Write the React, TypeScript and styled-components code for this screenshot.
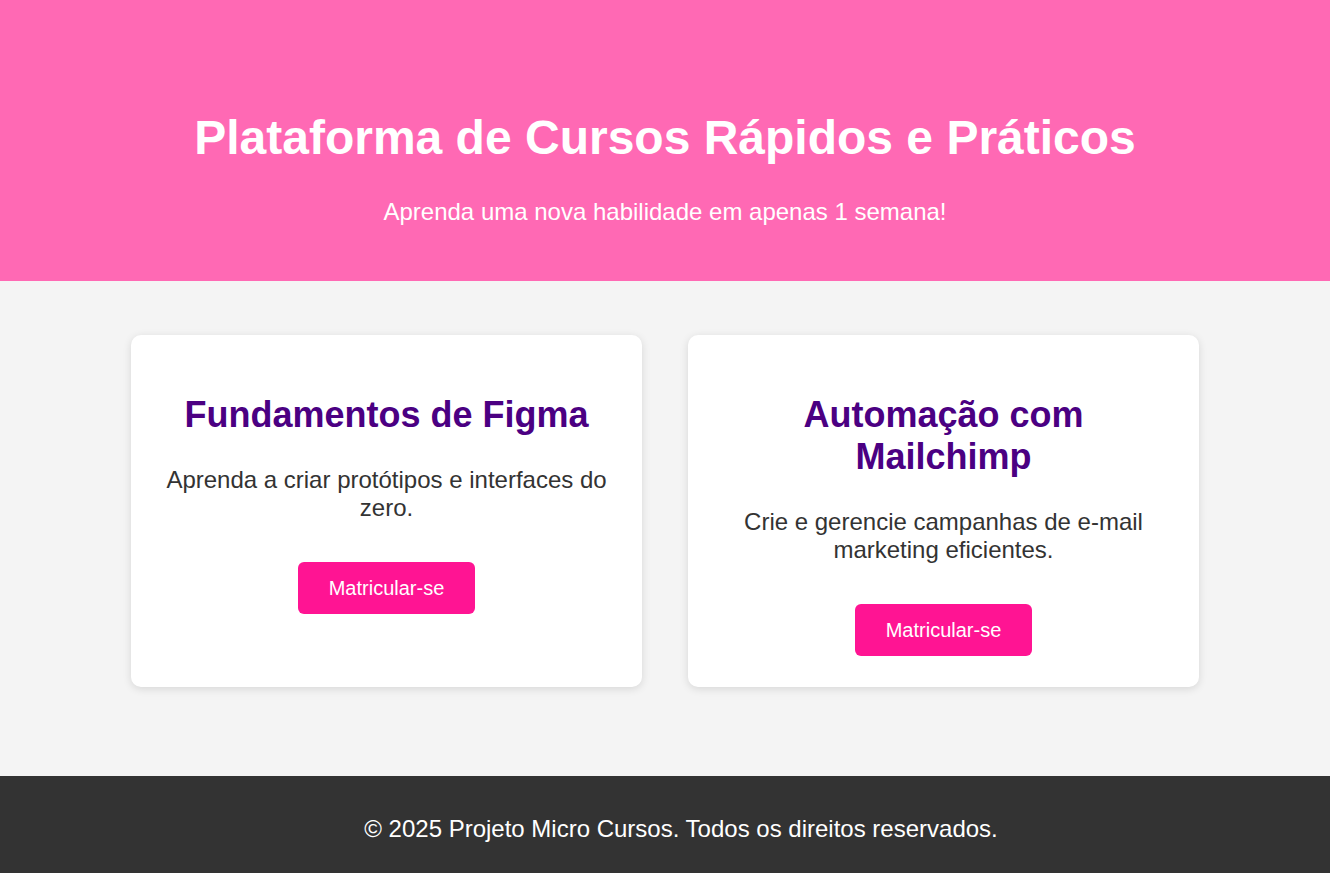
import React, { FC } from "react";
import styled, { createGlobalStyle } from "styled-components";

type Course = {
  title: string;
  description: string;
};

const courses: Course[] = [
  {
    title: "Fundamentos de Figma",
    description: "Aprenda a criar protótipos e interfaces do zero.",
  },
  {
    title: "Automação com Mailchimp",
    description: "Crie e gerencie campanhas de e-mail marketing eficientes.",
  },
];

const CourseCard: FC<Course> = ({ title, description }) => (
  <CardBase>
    <CardTitle>{title}</CardTitle>
    <CardText>{description}</CardText>
    <EnrollButton>Matricular-se</EnrollButton>
  </CardBase>
);

const App: FC = () => (
  <>
    <GlobalStyle />
    <Header>
      <HeaderTitle>Plataforma de Cursos Rápidos e Práticos</HeaderTitle>
      <HeaderSubtitle>Aprenda uma nova habilidade em apenas 1 semana!</HeaderSubtitle>
    </Header>
    <Main>
      <CardGrid>
        {courses.map((course, index) => (
          <CourseCard {...course} key={index} />
        ))}
      </CardGrid>
    </Main>
    <Footer>
      <FooterText>© 2025 Projeto Micro Cursos. Todos os direitos reservados.</FooterText>
    </Footer>
  </>
);

export default App;

const GlobalStyle = createGlobalStyle`
  body {
    margin: 0;
    font-family: "Liberation Sans", Arial, sans-serif;
    background: #f4f4f4;
  }
`;

const Header = styled.header`
  background: #ff69b4;
  color: #fff;
  text-align: center;
  padding: 110px 20px 55px;
`;

const HeaderTitle = styled.h1`
  font-size: 48px;
  margin: 0 0 33px;
`;

const HeaderSubtitle = styled.p`
  font-size: 24px;
  margin: 0;
`;

const Main = styled.main`
  padding: 54px 20px 89px;
`;

const CardGrid = styled.div`
  display: grid;
  grid-template-columns: repeat(2, 511px);
  justify-content: center;
  gap: 46px;
`;

const CardBase = styled.div`
  display: flex;
  flex-direction: column;
  align-items: center;
  text-align: center;
  background: #fff;
  border-radius: 10px;
  box-shadow: 0 2px 8px rgba(0, 0, 0, 0.12);
  padding: 30px 30px 31px;
`;

const CardTitle = styled.h2`
  color: #4b0082;
  font-size: 36px;
  margin: 29px 0 30px;
`;

const CardText = styled.p`
  color: #333;
  font-size: 24px;
  margin: 0 0 40px;
`;

const EnrollButton = styled.button`
  background: #ff1493;
  color: #fff;
  border: none;
  border-radius: 6px;
  font-family: inherit;
  font-size: 20px;
  line-height: 24px;
  padding: 14px 31px;
  cursor: pointer;
`;

const Footer = styled.footer`
  background: #333;
  color: #fff;
  text-align: center;
  padding: 39px 20px 39px 52px;
`;

const FooterText = styled.p`
  font-size: 24px;
  margin: 0;
`;
